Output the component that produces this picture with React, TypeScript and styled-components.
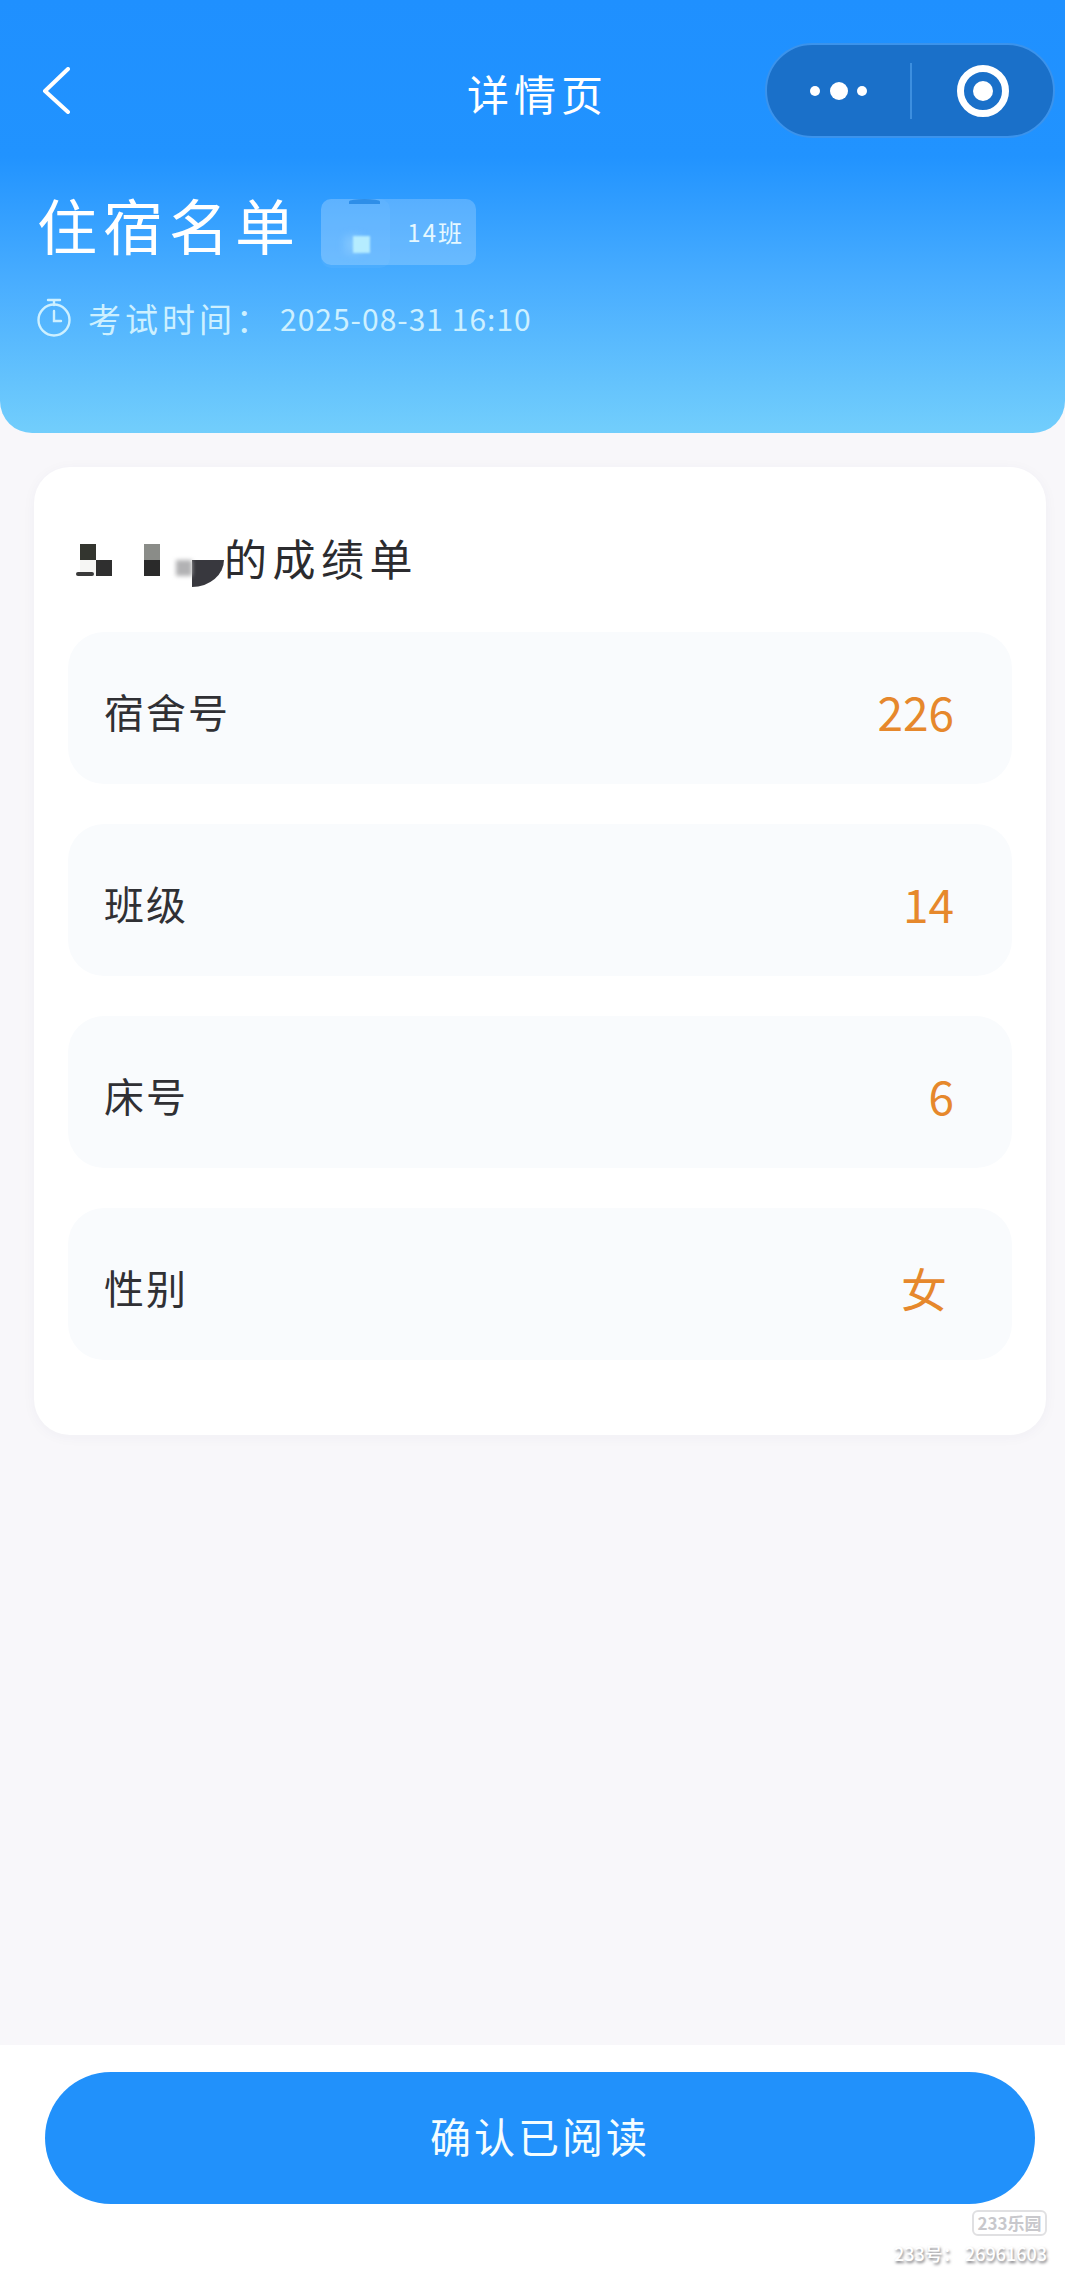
import styled, { createGlobalStyle } from "styled-components";

const GlobalStyle = createGlobalStyle`
  html, body {
    margin: 0;
    padding: 0;
    background: #f8f7fa;
  }
  * {
    box-sizing: border-box;
  }
`;

const Page = styled.div`
  position: relative;
  width: 100%;
  height: 2278px;
  overflow: hidden;
  display: flex;
  flex-direction: column;
  background: #f8f7fa;
  font-family: "Noto Sans CJK SC", "Noto Sans", sans-serif;
`;

const Hero = styled.header`
  height: 433px;
  flex-shrink: 0;
  padding-top: 43px;
  border-radius: 0 0 32px 32px;
  background: linear-gradient(180deg, #1f90ff 0%, #2193ff 36%, #4aaeff 66%, #72cefc 100%);
  color: #fff;
`;

const NavBar = styled.div`
  display: grid;
  grid-template-columns: 1fr auto 1fr;
  align-items: center;
  height: 95px;
  padding: 0 10px 0 20px;
`;

const BackButton = styled.div`
  display: flex;
  margin-left: 22px;
`;

const NavTitle = styled.div`
  font-size: 42px;
  letter-spacing: 5px;
  line-height: 60px;
  margin-top: 4px;
`;

const Capsule = styled.div`
  justify-self: end;
  display: flex;
  align-items: center;
  width: 290px;
  height: 95px;
  border: 2px solid #3b93ec;
  border-radius: 48px;
  background: #1a70c9;
`;

const CapsuleSide = styled.div<{ $width: number }>`
  display: flex;
  align-items: center;
  justify-content: center;
  width: ${(p) => p.$width}px;
  height: 56px;
`;

const CapsuleDivider = styled.div`
  width: 2px;
  height: 56px;
  background: #3d8fdf;
`;

const HeroHeading = styled.div`
  display: flex;
  align-items: flex-start;
  gap: 20px;
  margin-top: 55px;
  padding-left: 37px;
`;

const HeroTitle = styled.h1`
  margin: -4px 0 0;
  font-size: 60px;
  font-weight: 400;
  line-height: 70px;
  letter-spacing: 6px;
`;

const ClassBadge = styled.div`
  position: relative;
  display: flex;
  justify-content: flex-end;
  align-items: center;
  width: 155px;
  height: 66px;
  margin-top: 6px;
  padding-right: 12px;
  border-radius: 10px;
  background: rgba(255, 255, 255, 0.2);
  font-size: 24px;
  letter-spacing: 2px;
  line-height: 34px;
  color: #e6f8ff;
`;

const BadgeSmear = styled.div`
  position: absolute;
  left: 0;
  top: 0;
  width: 69px;
  height: 69px;
  border-radius: 10px;
  background: rgba(255, 255, 255, 0.04);
`;

const BadgeCap = styled.div`
  position: absolute;
  left: 28px;
  top: 0;
  width: 31px;
  height: 5px;
  border-radius: 50% 50% 0 0;
  background: #2e8ee8;
`;

const BadgeSquare = styled.div`
  position: absolute;
  left: 32px;
  top: 37px;
  width: 17px;
  height: 17px;
  background: #b5ecff;
  box-shadow: -8px 0 8px rgba(160, 215, 255, 0.45);
  filter: blur(1px);
`;

const ExamLine = styled.div`
  display: flex;
  align-items: center;
  margin-top: 31px;
  padding-left: 37px;
  color: #cdf0ff;
`;

const ExamLabel = styled.span`
  width: 192px;
  margin-left: 17px;
  font-size: 33px;
  letter-spacing: 4px;
  line-height: 44px;
`;

const ExamTime = styled.span`
  font-size: 30px;
  letter-spacing: 1px;
  line-height: 44px;
`;

const Content = styled.main`
  flex: 1;
  padding: 34px 19px 0 34px;
`;

const Card = styled.section`
  height: 968px;
  padding: 63px 34px 0;
  border-radius: 36px;
  background: #fff;
  box-shadow: 0 2px 14px rgba(40, 60, 90, 0.04);
`;

const CardHeading = styled.div`
  display: flex;
  align-items: flex-start;
  padding-left: 12px;
`;

const Mosaic = styled.div`
  position: relative;
  display: grid;
  grid-template-columns: repeat(9, 16px);
  grid-auto-rows: 16px;
  margin-top: 14px;
`;

const Pixel = styled.div<{ $color?: string; $col: number; $row: number; $span?: number }>`
  grid-column: ${(p) => p.$col} / span ${(p) => p.$span ?? 1};
  grid-row: ${(p) => p.$row};
  background: ${(p) => p.$color ?? "transparent"};
`;

const BlurPixel = styled(Pixel)`
  filter: blur(2px);
`;

const TailPixel = styled(Pixel)`
  height: 27px;
  border-radius: 0 0 100% 0;
`;

const Speck = styled.div`
  position: absolute;
  left: -4px;
  top: 28px;
  width: 18px;
  height: 4px;
  border-radius: 2px;
  background: #3a3a3a;
`;

const CardTitle = styled.h2`
  margin: -3px 0 3px;
  font-size: 43px;
  font-weight: 400;
  line-height: 60px;
  letter-spacing: 5.5px;
  color: #2b2b2e;
`;

const Rows = styled.div`
  display: flex;
  flex-direction: column;
  gap: 40px;
  margin-top: 42px;
`;

const Row = styled.div`
  display: flex;
  align-items: center;
  justify-content: space-between;
  height: 152px;
  padding: 6px 58px 0 36px;
  border-radius: 36px;
  background: #f9fbfd;
`;

const RowLabel = styled.span`
  font-size: 40px;
  letter-spacing: 2px;
  line-height: 56px;
  color: #303034;
`;

const RowValue = styled.span<{ $inset?: number }>`
  margin-right: ${(p) => p.$inset ?? 0}px;
  font-size: 46px;
  line-height: 56px;
  color: #e6882c;
`;

const Footer = styled.footer`
  position: relative;
  flex-shrink: 0;
  height: 233px;
  padding: 27px 30px 0 45px;
  background: #fff;
`;

const ConfirmButton = styled.button`
  display: block;
  width: 100%;
  height: 132px;
  padding: 0 0 6px;
  border: none;
  border-radius: 66px;
  background: #2191fb;
  color: #f4fdff;
  font-family: inherit;
  font-size: 41px;
  letter-spacing: 3px;
`;

const WatermarkLogo = styled.div`
  position: absolute;
  right: 18px;
  top: 165px;
  width: 75px;
  height: 26px;
  border: 2px solid #e0e0e2;
  border-radius: 6px;
  color: #c8c8cc;
  font-size: 17px;
  font-weight: 700;
  line-height: 22px;
  text-align: center;
`;

const WatermarkId = styled.div`
  position: absolute;
  right: 18px;
  top: 196px;
  color: #fff;
  font-size: 18px;
  font-weight: 500;
  line-height: 24px;
  white-space: nowrap;
  text-shadow: 1px 2px 3px #77777c;
`;

const rows = [
  { label: "宿舍号", value: "226" },
  { label: "班级", value: "14" },
  { label: "床号", value: "6" },
  { label: "性别", value: "女", inset: 7 },
];

export default function App() {
  return (
    <Page>
      <GlobalStyle />
      <Hero>
        <NavBar>
          <BackButton>
            <svg width="28" height="47" viewBox="0 0 28 47" fill="none">
              <path d="M26 2 L3 24 L26 45" stroke="#fff" strokeWidth="4" strokeLinecap="round" strokeLinejoin="round" />
            </svg>
          </BackButton>
          <NavTitle>详情页</NavTitle>
          <Capsule>
            <CapsuleSide $width={143}>
              <svg width="62" height="24" viewBox="0 0 62 24">
                <circle cx="7" cy="12" r="5" fill="#fff" />
                <circle cx="31" cy="12" r="9" fill="#fff" />
                <circle cx="54" cy="12" r="5" fill="#fff" />
              </svg>
            </CapsuleSide>
            <CapsuleDivider />
            <CapsuleSide $width={141}>
              <svg width="54" height="54" viewBox="0 0 54 54" fill="none">
                <circle cx="27" cy="27" r="22.5" stroke="#fff" strokeWidth="7" />
                <circle cx="27" cy="27" r="10" fill="#fff" />
              </svg>
            </CapsuleSide>
          </Capsule>
        </NavBar>
        <HeroHeading>
          <HeroTitle>住宿名单</HeroTitle>
          <ClassBadge>
            <BadgeSmear />
            <BadgeCap />
            <BadgeSquare />
            14班
          </ClassBadge>
        </HeroHeading>
        <ExamLine>
          <svg width="34" height="40" viewBox="0 0 34 40" fill="none" stroke="#cdf0ff" strokeWidth="2.4" strokeLinecap="round">
            <circle cx="17" cy="22" r="15.5" />
            <path d="M11 2 H23 M17 2 V7 M17 13 V23 H24" />
          </svg>
          <ExamLabel>考试时间：</ExamLabel>
          <ExamTime>2025-08-31 16:10</ExamTime>
        </ExamLine>
      </Hero>
      <Content>
        <Card>
          <CardHeading>
            <Mosaic>
              <Pixel $col={1} $row={1} $color="#33352f" />
              <Pixel $col={2} $row={2} $color="#2f2f2f" />
              <Pixel $col={1} $row={2} $color="#f6f6f4" />
              <Pixel $col={5} $row={1} $color="#8a8c88" />
              <Pixel $col={5} $row={2} $color="#2a2a2a" />
              <BlurPixel $col={7} $row={2} $color="#b2b2b4" />
              <TailPixel $col={8} $row={2} $span={2} $color="#38383e" />
              <Speck />
            </Mosaic>
            <CardTitle>的成绩单</CardTitle>
          </CardHeading>
          <Rows>
            {rows.map((row) => (
              <Row key={row.label}>
                <RowLabel>{row.label}</RowLabel>
                <RowValue $inset={row.inset}>{row.value}</RowValue>
              </Row>
            ))}
          </Rows>
        </Card>
      </Content>
      <Footer>
        <ConfirmButton>确认已阅读</ConfirmButton>
        <WatermarkLogo>233乐园</WatermarkLogo>
        <WatermarkId>233号： 26961603</WatermarkId>
      </Footer>
    </Page>
  );
}
